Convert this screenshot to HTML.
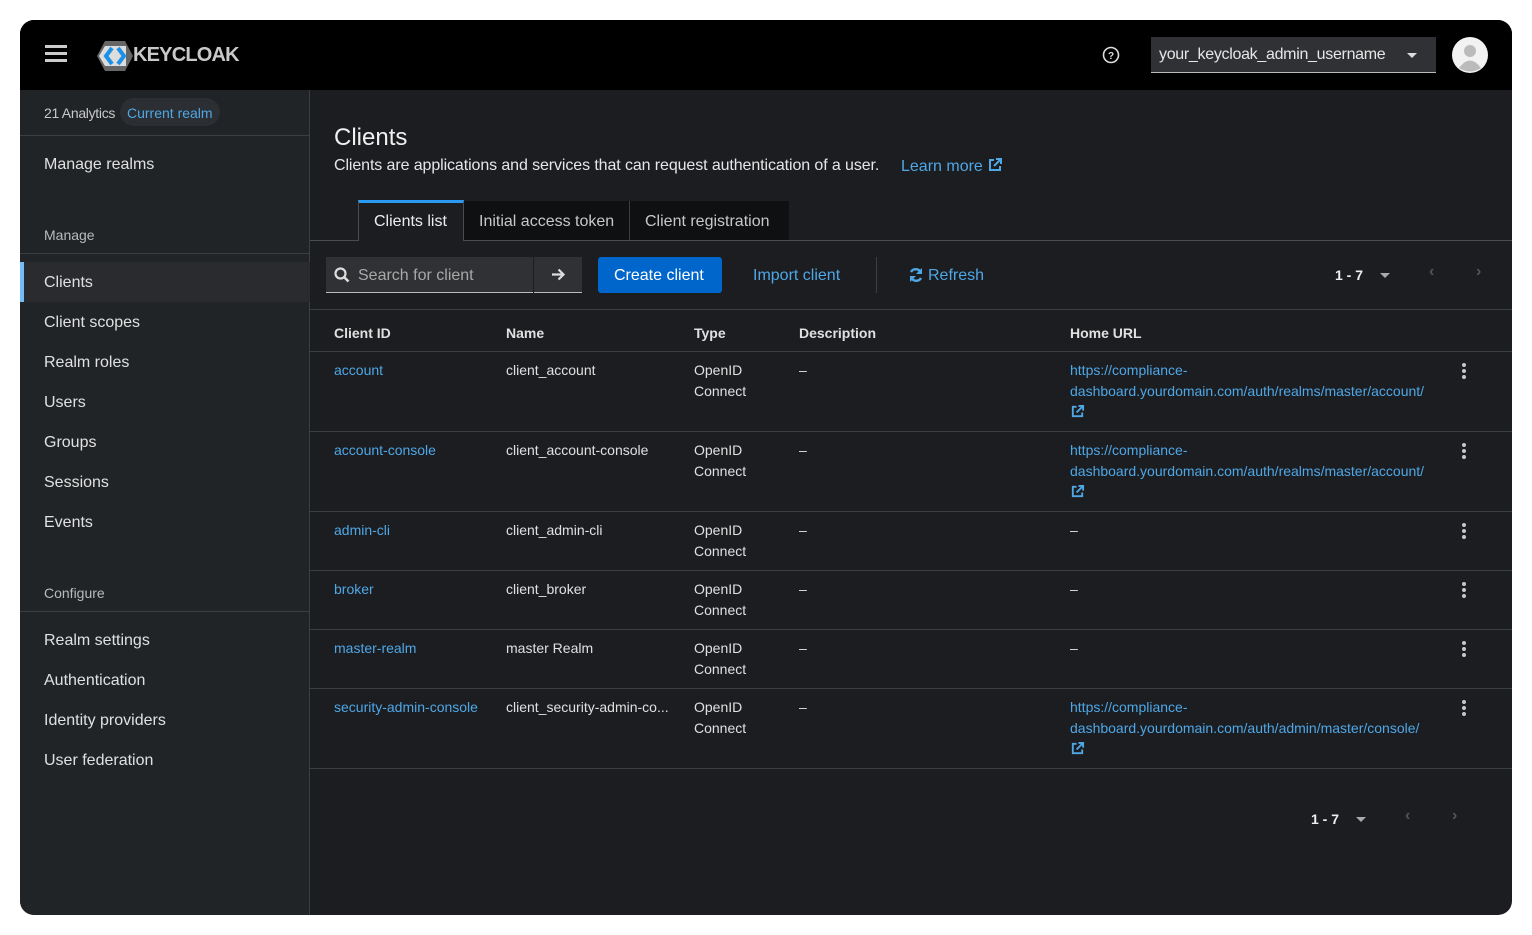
<!DOCTYPE html>
<html><head><meta charset="utf-8"><style>
*{box-sizing:border-box;margin:0;padding:0}
body{width:1532px;height:935px;background:#fff;font-family:"Liberation Sans",sans-serif;color:#e0e0e0;position:relative;overflow:hidden}
.frame{position:absolute;left:20px;top:20px;width:1492px;height:895px;border-radius:14px;overflow:hidden;background:#1b1d21}
.hdr{position:absolute;left:0;top:0;width:100%;height:70px;background:#000}
.side{position:absolute;left:0;top:70px;width:290px;height:825px;background:#212427;border-right:1px solid #3c3f42}
.main{position:absolute;left:290px;top:70px;right:0;bottom:0}
.a{position:absolute;white-space:nowrap}
.nav{position:absolute;left:24px;font-size:16px;color:#e0e0e0}
.sec{position:absolute;left:24px;font-size:14px;color:#b8bbbe}
.line{position:absolute;height:1px;background:#3c3f42}
.blue{color:#4fa7e6}
.t{font-size:14px;color:#e0e0e0;position:absolute;white-space:nowrap;line-height:21px}
.t.blue{color:#4fa7e6}
.kebab{position:absolute;left:1152px;width:4px}
.kebab i{display:block;width:4px;height:4px;border-radius:2px;background:#c7c7c7;margin-bottom:2px}
</style></head><body>
<svg width="0" height="0" style="position:absolute"><defs><symbol id="ext" viewBox="0 0 16 16"><path d="M7 3H3v10h10V9" stroke="#4fa7e6" stroke-width="2" fill="none"/><path d="M9 2h5v5M14 2L7 9" stroke="#4fa7e6" stroke-width="2" fill="none"/></symbol></defs></svg>
<div class="frame">
<div class="hdr">
  <div class="a" style="left:25px;top:25px;width:22px;height:3px;background:#ccc;box-shadow:0 7px 0 #ccc,0 14px 0 #ccc"></div>
  <svg class="a" style="left:76px;top:20px" width="38" height="32" viewBox="0 0 38 32"><polygon points="9,1 29,1 37,16 29,31 9,31 1,16" fill="#666"/><polygon points="3,16 9,6 30,6 30,26 9,26" fill="#ddd"/><path d="M16 8 L10 16 L16 24" stroke="#1e90e8" stroke-width="4" fill="none"/><path d="M22 8 L28 16 L22 24" stroke="#1e90e8" stroke-width="4" fill="none"/></svg>
  <div class="a" style="left:113px;top:24px;font-size:20px;font-weight:bold;color:#c9c9c9;letter-spacing:-0.8px">KEYCLOAK</div>
  <svg class="a" style="left:1082px;top:26px" width="18" height="18" viewBox="0 0 18 18"><circle cx="9" cy="9" r="7.5" stroke="#ddd" stroke-width="1.6" fill="none"/><text x="9" y="13" font-size="10" font-weight="bold" fill="#ddd" text-anchor="middle" font-family="Liberation Sans">?</text></svg>
  <div class="a" style="left:1131px;top:17px;width:285px;height:36px;background:#2f3134;border-bottom:1px solid #bbb"></div>
  <div class="a" style="left:1139px;top:26px;font-size:16px;color:#e6e6e6;letter-spacing:-0.3px">your_keycloak_admin_username</div>
  <div class="a" style="left:1387px;top:33px;border-left:5px solid transparent;border-right:5px solid transparent;border-top:5px solid #ddd"></div>
  <svg class="a" style="left:1432px;top:17px" width="36" height="36" viewBox="0 0 36 36"><circle cx="18" cy="18" r="18" fill="#f2f2f2"/><circle cx="18" cy="14" r="6" fill="#bbb"/><path d="M7 31 Q18 16 29 31 Q18 38 7 31Z" fill="#bbb"/></svg>
</div>
<div class="side">
  <div class="a" style="left:24px;top:15px;font-size:14px;color:#c8c8c8;letter-spacing:-0.3px">21 Analytics</div>
  <div class="a" style="left:100px;top:8px;width:100px;height:28px;border-radius:14px;background:#2b2e32"></div>
  <div class="a blue" style="left:107px;top:15px;font-size:14px">Current realm</div>
  <div class="line" style="left:0;top:45px;width:290px"></div>
  <div class="nav" style="top:66px">Manage realms</div>
  <div class="sec" style="top:137px">Manage</div>
  <div class="line" style="left:0;top:163px;width:290px"></div>
  <div class="a" style="left:0;top:172px;width:290px;height:40px;background:#292b2f;border-left:4px solid #73bcf7"></div>
  <div class="nav" style="top:184px">Clients</div>
  <div class="nav" style="top:224px">Client scopes</div>
  <div class="nav" style="top:264px">Realm roles</div>
  <div class="nav" style="top:304px">Users</div>
  <div class="nav" style="top:344px">Groups</div>
  <div class="nav" style="top:384px">Sessions</div>
  <div class="nav" style="top:424px">Events</div>
  <div class="sec" style="top:495px">Configure</div>
  <div class="line" style="left:0;top:521px;width:290px"></div>
  <div class="nav" style="top:542px">Realm settings</div>
  <div class="nav" style="top:582px">Authentication</div>
  <div class="nav" style="top:622px">Identity providers</div>
  <div class="nav" style="top:662px">User federation</div>
</div>
<div class="main">
  <div class="a" style="left:24px;top:34px;font-size:24px;color:#f0f0f0">Clients</div>
  <div class="a" style="left:24px;top:67px;font-size:16px;color:#e6e6e6;letter-spacing:-0.1px">Clients are applications and services that can request authentication of a user.</div>
  <div class="a blue" style="left:591px;top:67px;font-size:16px">Learn more <svg width="16" height="16" style="vertical-align:-2px"><use href="#ext"/></svg></div>
  <div class="line" style="left:0;top:150px;width:1202px;background:#4a4c50"></div>
  <div class="a" style="left:48px;top:110px;width:106px;height:41px;background:#1b1d21;border-top:3px solid #2b9af3;border-left:1px solid #4a4c50;border-right:1px solid #4a4c50"></div>
  <div class="a" style="left:64px;top:123px;font-size:16px;color:#eee">Clients list</div>
  <div class="a" style="left:154px;top:111px;width:165px;height:39px;background:#0f1012"></div>
  <div class="a" style="left:169px;top:123px;font-size:16px;color:#c8c8c8">Initial access token</div>
  <div class="a" style="left:319px;top:111px;width:160px;height:39px;background:#0f1012;border-left:1px solid #3c3f42"></div>
  <div class="a" style="left:335px;top:123px;font-size:16px;color:#c8c8c8">Client registration</div>
  <div class="a" style="left:16px;top:167px;width:256px;height:36px;background:#2f3134;border-bottom:1px solid #bbb"></div>
  <div class="a" style="left:223px;top:167px;width:1px;height:36px;background:#1b1d21"></div>
  <svg class="a" style="left:24px;top:177px" width="16" height="16" viewBox="0 0 16 16"><circle cx="6.5" cy="6.5" r="5" stroke="#ddd" stroke-width="2.2" fill="none"/><path d="M10 10l4.5 4.5" stroke="#ddd" stroke-width="2.6"/></svg>
  <div class="a" style="left:48px;top:177px;font-size:16px;color:#a8a8a8">Search for client</div>
  <svg class="a" style="left:241px;top:177px" width="15" height="15" viewBox="0 0 15 15"><path d="M1 7.5h11M7.5 2.5l5 5-5 5" stroke="#ddd" stroke-width="2.2" fill="none"/></svg>
  <div class="a" style="left:288px;top:167px;width:124px;height:36px;background:#0066cc;border-radius:3px"></div>
  <div class="a" style="left:304px;top:177px;font-size:16px;color:#fff">Create client</div>
  <div class="a blue" style="left:443px;top:177px;font-size:16px">Import client</div>
  <div class="a" style="left:566px;top:167px;width:1px;height:36px;background:#3c3f42"></div>
  <svg class="a" style="left:598px;top:177px" width="16" height="16" viewBox="0 0 16 16"><path d="M13 6A5.5 5.5 0 0 0 3 5" stroke="#4fa7e6" stroke-width="2.4" fill="none"/><path d="M3 10a5.5 5.5 0 0 0 10 1" stroke="#4fa7e6" stroke-width="2.4" fill="none"/><path d="M14 1v6H8z" fill="#4fa7e6"/><path d="M2 15V9h6z" fill="#4fa7e6"/></svg>
  <div class="a blue" style="left:618px;top:177px;font-size:16px">Refresh</div>
  <div class="a" style="left:1025px;top:177px;font-size:14px;color:#eee;font-weight:bold">1 - 7</div>
  <div class="a" style="left:1070px;top:183px;border-left:5px solid transparent;border-right:5px solid transparent;border-top:5px solid #aaa"></div>
  <div class="a" style="left:1119px;top:173px;font-size:16px;color:#555;font-weight:bold">&lsaquo;</div>
  <div class="a" style="left:1166px;top:173px;font-size:16px;color:#555;font-weight:bold">&rsaquo;</div>
  <div class="line" style="left:0;top:219px;width:1202px"></div>
  <div class="t" style="left:24px;top:233px;font-weight:bold">Client ID</div>
  <div class="t" style="left:196px;top:233px;font-weight:bold">Name</div>
  <div class="t" style="left:384px;top:233px;font-weight:bold">Type</div>
  <div class="t" style="left:489px;top:233px;font-weight:bold">Description</div>
  <div class="t" style="left:760px;top:233px;font-weight:bold">Home URL</div>
  <div class="line" style="left:0;top:261px;width:1202px"></div>

  <div class="t blue" style="left:24px;top:270px">account</div><div class="t" style="left:196px;top:270px">client_account</div><div class="t" style="left:384px;top:270px">OpenID<br>Connect</div><div class="t" style="left:489px;top:270px">–</div><div class="t blue" style="left:760px;top:270px">https://compliance-<br>dashboard.yourdomain.com/auth/realms/master/account/<br><svg width="15" height="15" style="vertical-align:-2px"><use href="#ext"/></svg></div><div class="kebab" style="top:273px"><i></i><i></i><i></i></div>
  <div class="line" style="left:0;top:341px;width:1202px"></div>
  <div class="t blue" style="left:24px;top:350px">account-console</div><div class="t" style="left:196px;top:350px">client_account-console</div><div class="t" style="left:384px;top:350px">OpenID<br>Connect</div><div class="t" style="left:489px;top:350px">–</div><div class="t blue" style="left:760px;top:350px">https://compliance-<br>dashboard.yourdomain.com/auth/realms/master/account/<br><svg width="15" height="15" style="vertical-align:-2px"><use href="#ext"/></svg></div><div class="kebab" style="top:353px"><i></i><i></i><i></i></div>
  <div class="line" style="left:0;top:421px;width:1202px"></div>
  <div class="t blue" style="left:24px;top:430px">admin-cli</div><div class="t" style="left:196px;top:430px">client_admin-cli</div><div class="t" style="left:384px;top:430px">OpenID<br>Connect</div><div class="t" style="left:489px;top:430px">–</div><div class="t" style="left:760px;top:430px">–</div><div class="kebab" style="top:433px"><i></i><i></i><i></i></div>
  <div class="line" style="left:0;top:480px;width:1202px"></div>
  <div class="t blue" style="left:24px;top:489px">broker</div><div class="t" style="left:196px;top:489px">client_broker</div><div class="t" style="left:384px;top:489px">OpenID<br>Connect</div><div class="t" style="left:489px;top:489px">–</div><div class="t" style="left:760px;top:489px">–</div><div class="kebab" style="top:492px"><i></i><i></i><i></i></div>
  <div class="line" style="left:0;top:539px;width:1202px"></div>
  <div class="t blue" style="left:24px;top:548px">master-realm</div><div class="t" style="left:196px;top:548px">master Realm</div><div class="t" style="left:384px;top:548px">OpenID<br>Connect</div><div class="t" style="left:489px;top:548px">–</div><div class="t" style="left:760px;top:548px">–</div><div class="kebab" style="top:551px"><i></i><i></i><i></i></div>
  <div class="line" style="left:0;top:598px;width:1202px"></div>
  <div class="t blue" style="left:24px;top:607px">security-admin-console</div><div class="t" style="left:196px;top:607px">client_security-admin-co...</div><div class="t" style="left:384px;top:607px">OpenID<br>Connect</div><div class="t" style="left:489px;top:607px">–</div><div class="t blue" style="left:760px;top:607px">https://compliance-<br>dashboard.yourdomain.com/auth/admin/master/console/<br><svg width="15" height="15" style="vertical-align:-2px"><use href="#ext"/></svg></div><div class="kebab" style="top:610px"><i></i><i></i><i></i></div>
  <div class="line" style="left:0;top:678px;width:1202px"></div>

  <div class="a" style="left:1001px;top:721px;font-size:14px;color:#eee;font-weight:bold">1 - 7</div>
  <div class="a" style="left:1046px;top:727px;border-left:5px solid transparent;border-right:5px solid transparent;border-top:5px solid #aaa"></div>
  <div class="a" style="left:1095px;top:717px;font-size:16px;color:#555;font-weight:bold">&lsaquo;</div>
  <div class="a" style="left:1142px;top:717px;font-size:16px;color:#555;font-weight:bold">&rsaquo;</div>
</div>
</div>
</body></html>
